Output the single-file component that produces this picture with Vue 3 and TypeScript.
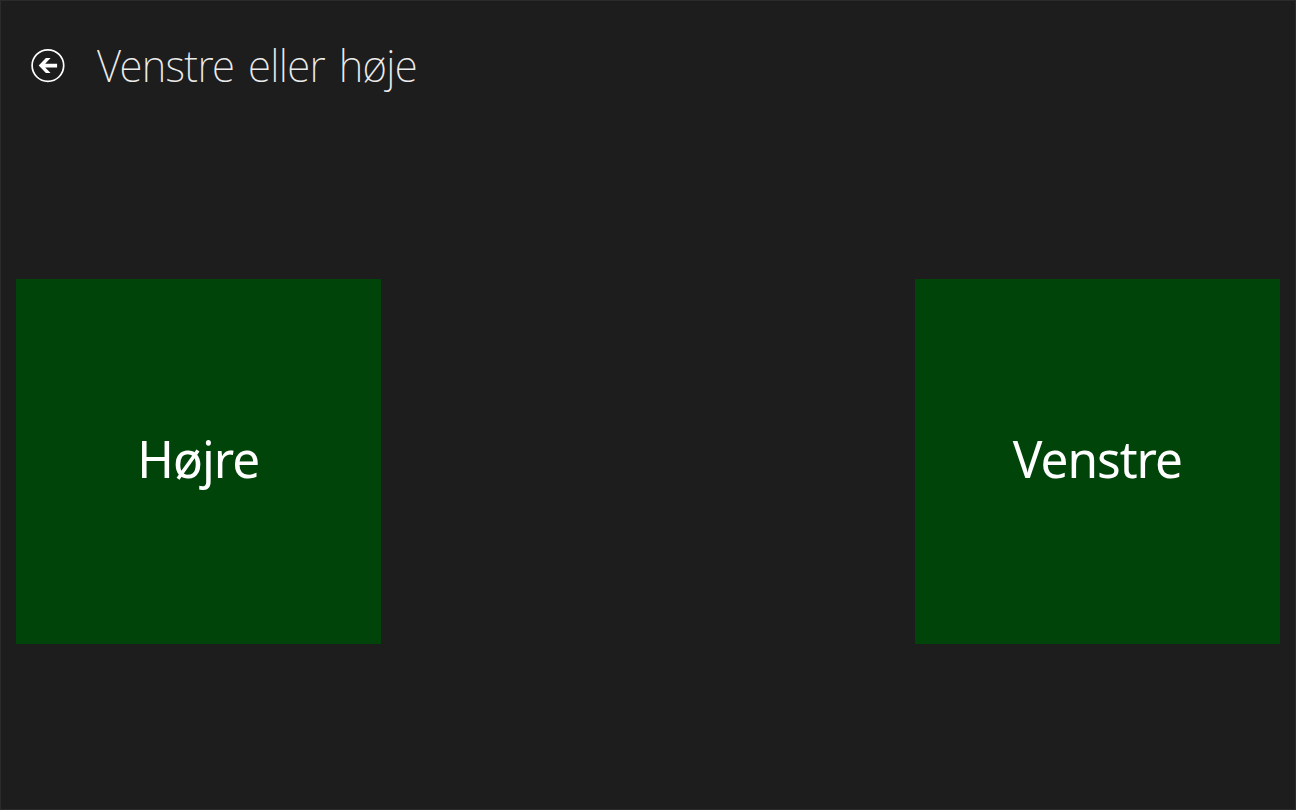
<script setup lang="ts">
interface Choice {
  id: string;
  label: string;
}

const title = 'Venstre eller høje';

const choices: Choice[] = [
  { id: 'right', label: 'Højre' },
  { id: 'left', label: 'Venstre' },
];

const emit = defineEmits<{
  back: [];
  choose: [id: string];
}>();
</script>

<template>
  <div class="page">
    <header class="header">
      <button class="back" aria-label="Tilbage" @click="emit('back')">
        <svg width="36" height="36" viewBox="0 0 36 36">
          <circle cx="17.9" cy="17.6" r="15.8" fill="none" stroke="#fff" stroke-width="1.7" />
          <path d="M8.7 17.6 L15.9 10.1 H20.6 L15.2 15.7 H27.1 V19.5 H15.2 L20.6 25.1 H15.9 Z" fill="#fff" />
        </svg>
      </button>
      <h1 class="title">{{ title }}</h1>
    </header>

    <main class="choices">
      <button
        v-for="choice in choices"
        :key="choice.id"
        class="tile"
        @click="emit('choose', choice.id)"
      >
        <span class="label">{{ choice.label }}</span>
      </button>
    </main>
  </div>
</template>

<style>
body { background: #1d1d1d; }
</style>

<style scoped>
.page {
  box-sizing: border-box;
  width: 100%;
  height: 100vh;
  overflow: hidden;
  border: 1px solid #2b2b2b;
  background: #1d1d1d;
  color: #fff;
  font-family: "Noto Sans", "Open Sans", sans-serif;
}
.header {
  display: flex;
  align-items: center;
  height: 130px;
  padding-left: 29px;
}
.back {
  display: block;
  width: 36px;
  height: 36px;
  padding: 0;
  border: 0;
  background: none;
  cursor: pointer;
}
.back svg { display: block; }
.title {
  margin: 0 0 2px 31px;
  font-size: 44.5px;
  font-weight: 250;
  line-height: 60px;
  letter-spacing: -0.7px;
  word-spacing: 3.7px;
  white-space: nowrap;
  color: #ececec;
  transform: scaleX(0.945);
  transform-origin: left center;
}
.choices {
  display: flex;
  justify-content: space-between;
  padding: 148px 15px 0;
}
.tile {
  box-sizing: border-box;
  display: flex;
  align-items: center;
  justify-content: center;
  width: 365px;
  height: 365px;
  padding: 0 0 6px;
  border: 0;
  background: #004409;
  color: #fff;
  font-family: inherit;
  cursor: pointer;
}
.label {
  font-size: 50.5px;
  font-weight: 400;
  line-height: 68px;
  letter-spacing: -1px;
  white-space: nowrap;
  transform: scaleX(0.98);
}
</style>
